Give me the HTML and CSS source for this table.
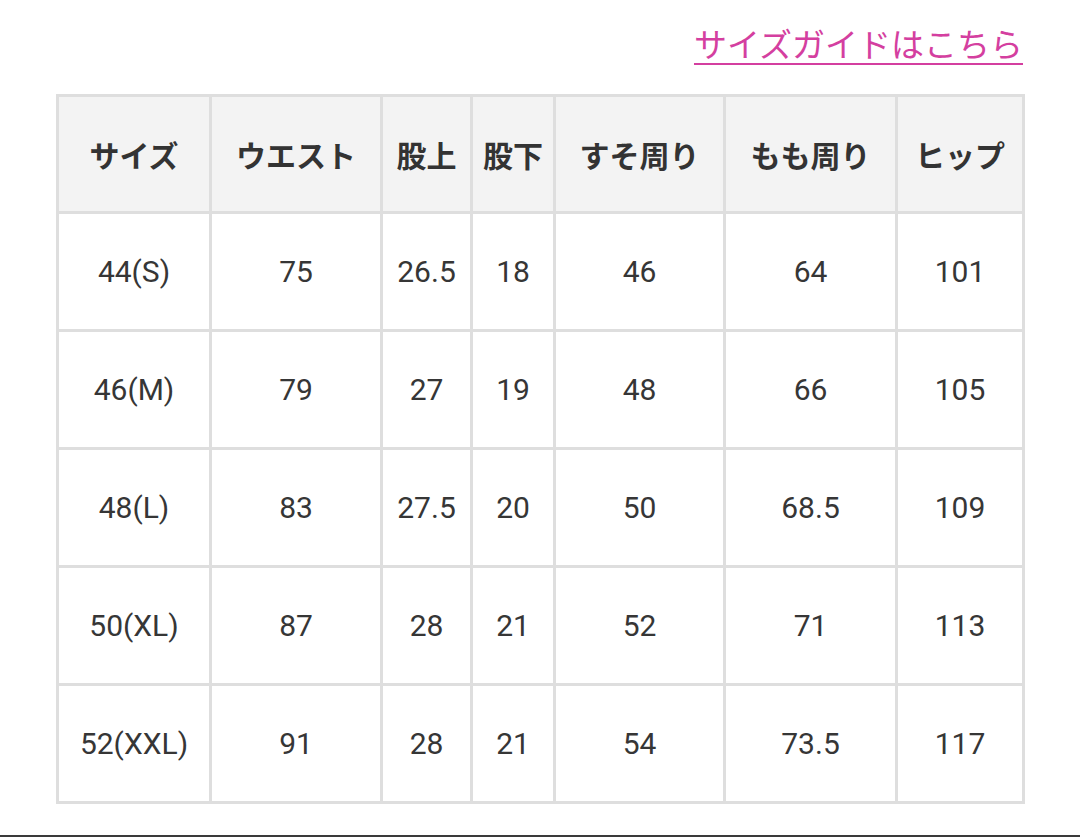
FILE: index.html
```html
<!DOCTYPE html>
<html lang="ja">
<head>
<meta charset="utf-8">
<link rel="stylesheet" href="styles.css">
</head>
<body>
<div class="page">
  <div class="guide-row">
    <a class="guide-link" href="#">サイズガイドはこちら</a>
  </div>
  <table class="size-table">
    <colgroup>
      <col class="c1"><col class="c2"><col class="c3"><col class="c4"><col class="c5"><col class="c6"><col class="c7">
    </colgroup>
    <thead>
      <tr class="head-row">
        <th>サイズ</th><th>ウエスト</th><th>股上</th><th>股下</th><th>すそ周り</th><th>もも周り</th><th>ヒップ</th>
      </tr>
    </thead>
    <tbody>
      <tr><td>44(S)</td><td>75</td><td>26.5</td><td>18</td><td>46</td><td>64</td><td>101</td></tr>
      <tr><td>46(M)</td><td>79</td><td>27</td><td>19</td><td>48</td><td>66</td><td>105</td></tr>
      <tr><td>48(L)</td><td>83</td><td>27.5</td><td>20</td><td>50</td><td>68.5</td><td>109</td></tr>
      <tr><td>50(XL)</td><td>87</td><td>28</td><td>21</td><td>52</td><td>71</td><td>113</td></tr>
      <tr><td>52(XXL)</td><td>91</td><td>28</td><td>21</td><td>54</td><td>73.5</td><td>117</td></tr>
    </tbody>
  </table>
  <div class="bottom-rule"></div>
</div>
</body>
</html>
```
FILE: styles.css
```css
html, body {
  margin: 0;
  padding: 0;
  background: #fff;
}
body {
  font-family: Roboto, "Noto Sans CJK JP", sans-serif;
  color: #333;
}
.page {
  width: 1080px;
  height: 837px;
  overflow: hidden;
  display: flex;
  flex-direction: column;
}
.guide-row {
  display: flex;
  justify-content: flex-end;
  padding: 24px 57px 0 0;
  height: 94px;
  box-sizing: border-box;
}
.guide-link {
  font-size: 33px;
  line-height: 44px;
  height: 44px;
  color: #d43fa0;
  text-decoration: underline;
  text-decoration-thickness: 2px;
  text-underline-offset: 6px;
}
.size-table {
  margin-left: 56px;
  border-collapse: collapse;
  table-layout: fixed;
  width: 969px;
}
.size-table th,
.size-table td {
  border: 3px solid #dedede;
  text-align: center;
  vertical-align: middle;
  padding: 0;
  font-size: 30px;
  white-space: nowrap;
}
.size-table td {
  color: #363636;
}
.size-table th {
  background: #f3f3f3;
  font-weight: bold;
  color: #333;
}
.head-row {
  height: 117px;
}
.size-table tbody tr {
  height: 118px;
}
.c1 { width: 153px; }
.c2 { width: 171px; }
.c3 { width: 90px; }
.c4 { width: 83px; }
.c5 { width: 170px; }
.c6 { width: 172px; }
.c7 { width: 127px; }
.bottom-rule {
  margin-top: auto;
  height: 2px;
  background: #3a3a3a;
}
```
